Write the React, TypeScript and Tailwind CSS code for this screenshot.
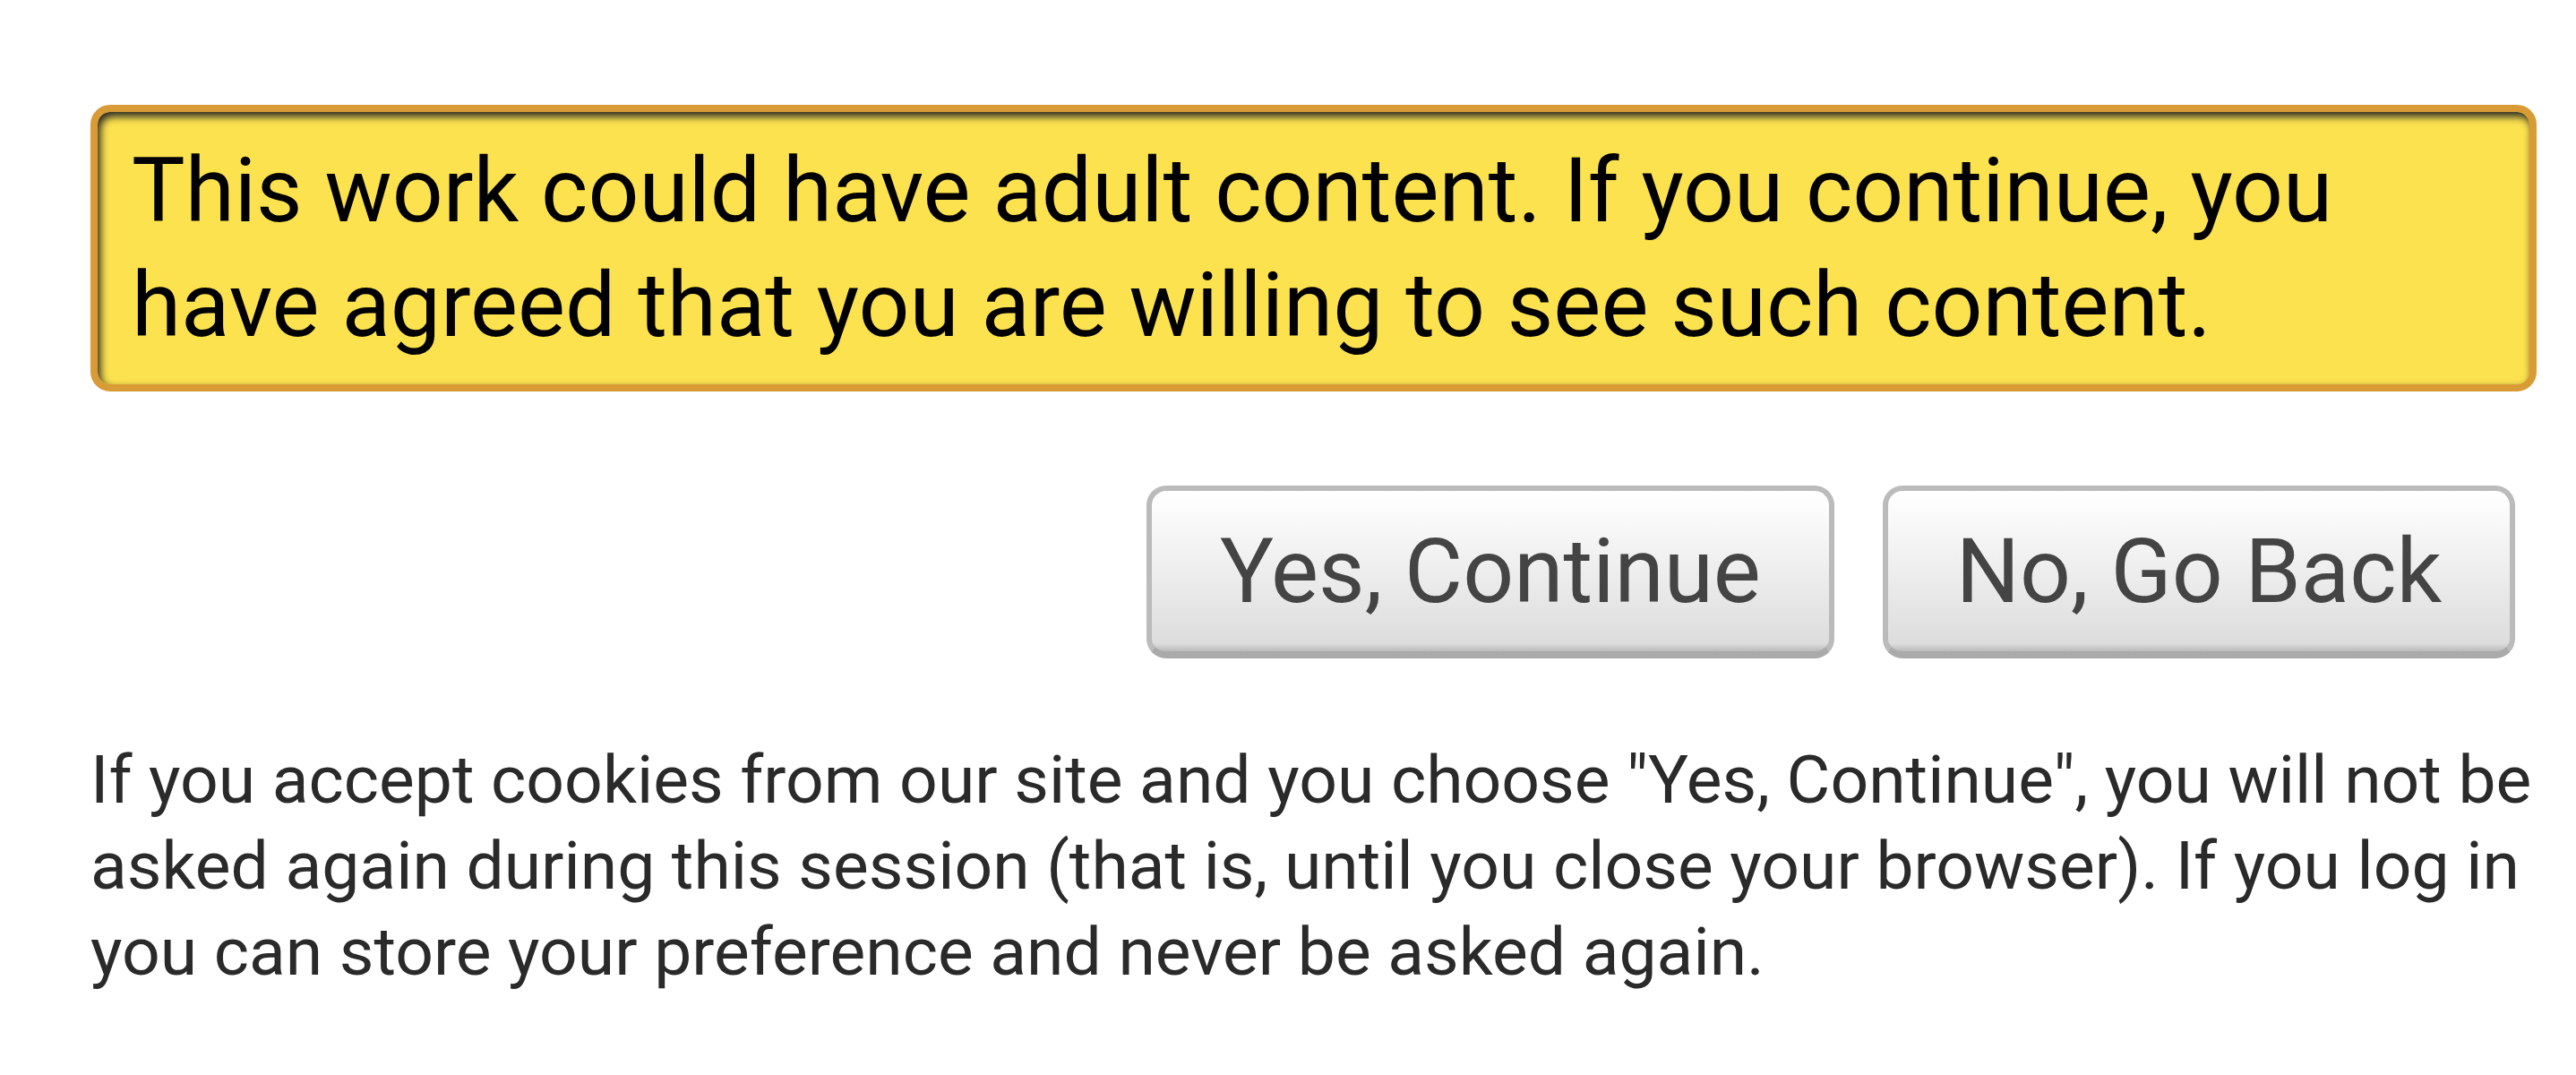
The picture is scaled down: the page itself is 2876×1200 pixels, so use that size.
export default function App() {
  return (
    <div className="min-h-screen bg-white pl-[101px] pr-[20px] pt-[117px] font-['Roboto','Liberation_Sans',sans-serif]">
      <div className="mr-[24px] rounded-[22px] border-[8px] border-[#d89b35] bg-[#fde24f] px-[38px] py-[24px] text-[100px] leading-[128px] text-black shadow-[inset_3px_5px_10px_#222]">
        This work could have adult content. If you continue, you have agreed that you are willing to see such content.
      </div>

      <div className="mr-[48px] mt-[105px] flex justify-end gap-[54px]">
        <button className="flex h-[193px] w-[768px] items-center justify-center rounded-[22px] border-[6px] border-b-[8px] border-[#bbb] border-b-[#aaa] bg-[linear-gradient(#fff_2%,#ddd_95%,#bbb_100%)] text-[100px] leading-none text-[#444]">
          Yes, Continue
        </button>
        <button className="flex h-[193px] w-[706px] items-center justify-center rounded-[22px] border-[6px] border-b-[8px] border-[#bbb] border-b-[#aaa] bg-[linear-gradient(#fff_2%,#ddd_95%,#bbb_100%)] text-[100px] leading-none text-[#444]">
          No, Go Back
        </button>
      </div>

      <p className="mt-[87px] text-[75px] leading-[96px] text-[#2a2a2a]">
        If you accept cookies from our site and you choose "Yes, Continue", you will not be asked again during this session (that is, until you close your browser). If you log in you can store your preference and never be asked again.
      </p>
    </div>
  );
}
